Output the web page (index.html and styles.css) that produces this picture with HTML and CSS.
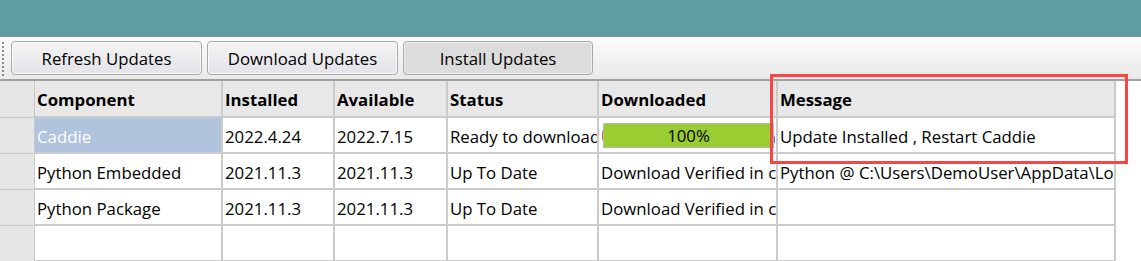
FILE: index.html
```html
<!DOCTYPE html>
<html>
<head>
<meta charset="utf-8">
<link rel="stylesheet" href="styles.css">
</head>
<body>
<div class="titlebar"></div>
<div class="toolbar">
  <div class="grip"><span></span><span></span><span></span><span></span><span></span><span></span><span></span><span></span><span></span></div>
  <button class="btn">Refresh Updates</button>
  <button class="btn">Download Updates</button>
  <button class="btn pressed">Install Updates</button>
</div>
<div class="gridwrap">
  <div class="grid">
    <div class="rh head"></div>
    <div class="c head">Component</div>
    <div class="c head">Installed</div>
    <div class="c head">Available</div>
    <div class="c head">Status</div>
    <div class="c head">Downloaded</div>
    <div class="c head">Message</div>

    <div class="rh"></div>
    <div class="c sel">Caddie</div>
    <div class="c">2022.4.24</div>
    <div class="c">2022.7.15</div>
    <div class="c">Ready to download</div>
    <div class="c prog"><span class="under">Update Downloaded at</span><div class="bar">100%</div></div>
    <div class="c">Update Installed , Restart Caddie</div>

    <div class="rh"></div>
    <div class="c">Python Embedded</div>
    <div class="c">2021.11.3</div>
    <div class="c">2021.11.3</div>
    <div class="c">Up To Date</div>
    <div class="c">Download Verified in cache</div>
    <div class="c">Python @ C:\Users\DemoUser\AppData\Local\Caddie</div>

    <div class="rh"></div>
    <div class="c">Python Package</div>
    <div class="c">2021.11.3</div>
    <div class="c">2021.11.3</div>
    <div class="c">Up To Date</div>
    <div class="c">Download Verified in cache</div>
    <div class="c"></div>

    <div class="rh"></div>
    <div class="c"></div>
    <div class="c"></div>
    <div class="c"></div>
    <div class="c"></div>
    <div class="c"></div>
    <div class="c"></div>
  </div>
  <div class="highlight"></div>
</div>
</body>
</html>
```

FILE: styles.css
```css
* { box-sizing: border-box; }
html, body { margin: 0; padding: 0; background: #ffffff; overflow: hidden; }
body { width: 1141px; height: 261px; font-family: "Open Sans", "Noto Sans", sans-serif; font-size: 16.8px; color: #000; }

.titlebar { height: 37px; background: #5f9ea0; border-bottom: 1px solid #7b8f8f; }

.toolbar {
  height: 44px;
  display: flex;
  align-items: flex-start;
  gap: 5px;
  padding: 4px 0 0 2px;
  background: linear-gradient(#fcfcfc, #e9e9e9);
  border-bottom: 2px solid #a0a0a0;
}
.grip { display: flex; flex-direction: column; gap: 2px; width: 2px; margin-top: 1px; margin-right: 2px; }
.grip span { width: 2px; height: 2px; background: #8c8c8c; display: block; }

.btn {
  height: 34px;
  width: 191px;
  border: 1px solid #a8a8a8;
  border-radius: 4px;
  background: linear-gradient(#f4f4f4, #e3e3e8);
  font-family: inherit;
  font-size: 16.8px;
  color: #000;
  padding: 1px 0 0;
  box-shadow: inset 0 0 0 1px #fafafa;
}
.btn.pressed { background: #dcdcdc; width: 190px; box-shadow: inset 0 0 0 1px #efefef; }

.gridwrap { position: relative; }
.grid {
  display: grid;
  width: 1116px;
  grid-template-columns: 35px 188px 112px 113px 151px 179px 338px;
  grid-template-rows: 37px 36px 36px 36px 36px;
}
.rh { background: #e6e6e6; border-right: 1px solid #c8c8c8; border-bottom: 1px solid #c8c8c8; }
.c {
  border-right: 2px solid #cbcbcb;
  border-bottom: 2px solid #cbcbcb;
  padding: 2px 0 0 2px;
  display: flex;
  align-items: center;
  white-space: nowrap;
  overflow: hidden;
}
.c.head { background: #e8e8e8; font-weight: 700; }
.c.sel { background: #b0c4de; color: #ffffff; }
.prog { position: relative; }
.under { position: absolute; left: 2px; }
.bar {
  position: absolute;
  left: 4px;
  top: 5px;
  width: 171px;
  height: 25px;
  background: #9acd32;
  border: 1px solid #b8b8b8;
  display: flex;
  align-items: center;
  justify-content: center;
}
.highlight {
  position: absolute;
  left: 770px;
  top: -7px;
  width: 358px;
  height: 90px;
  border: 3px solid #fa4545;
  pointer-events: none;
}
```
